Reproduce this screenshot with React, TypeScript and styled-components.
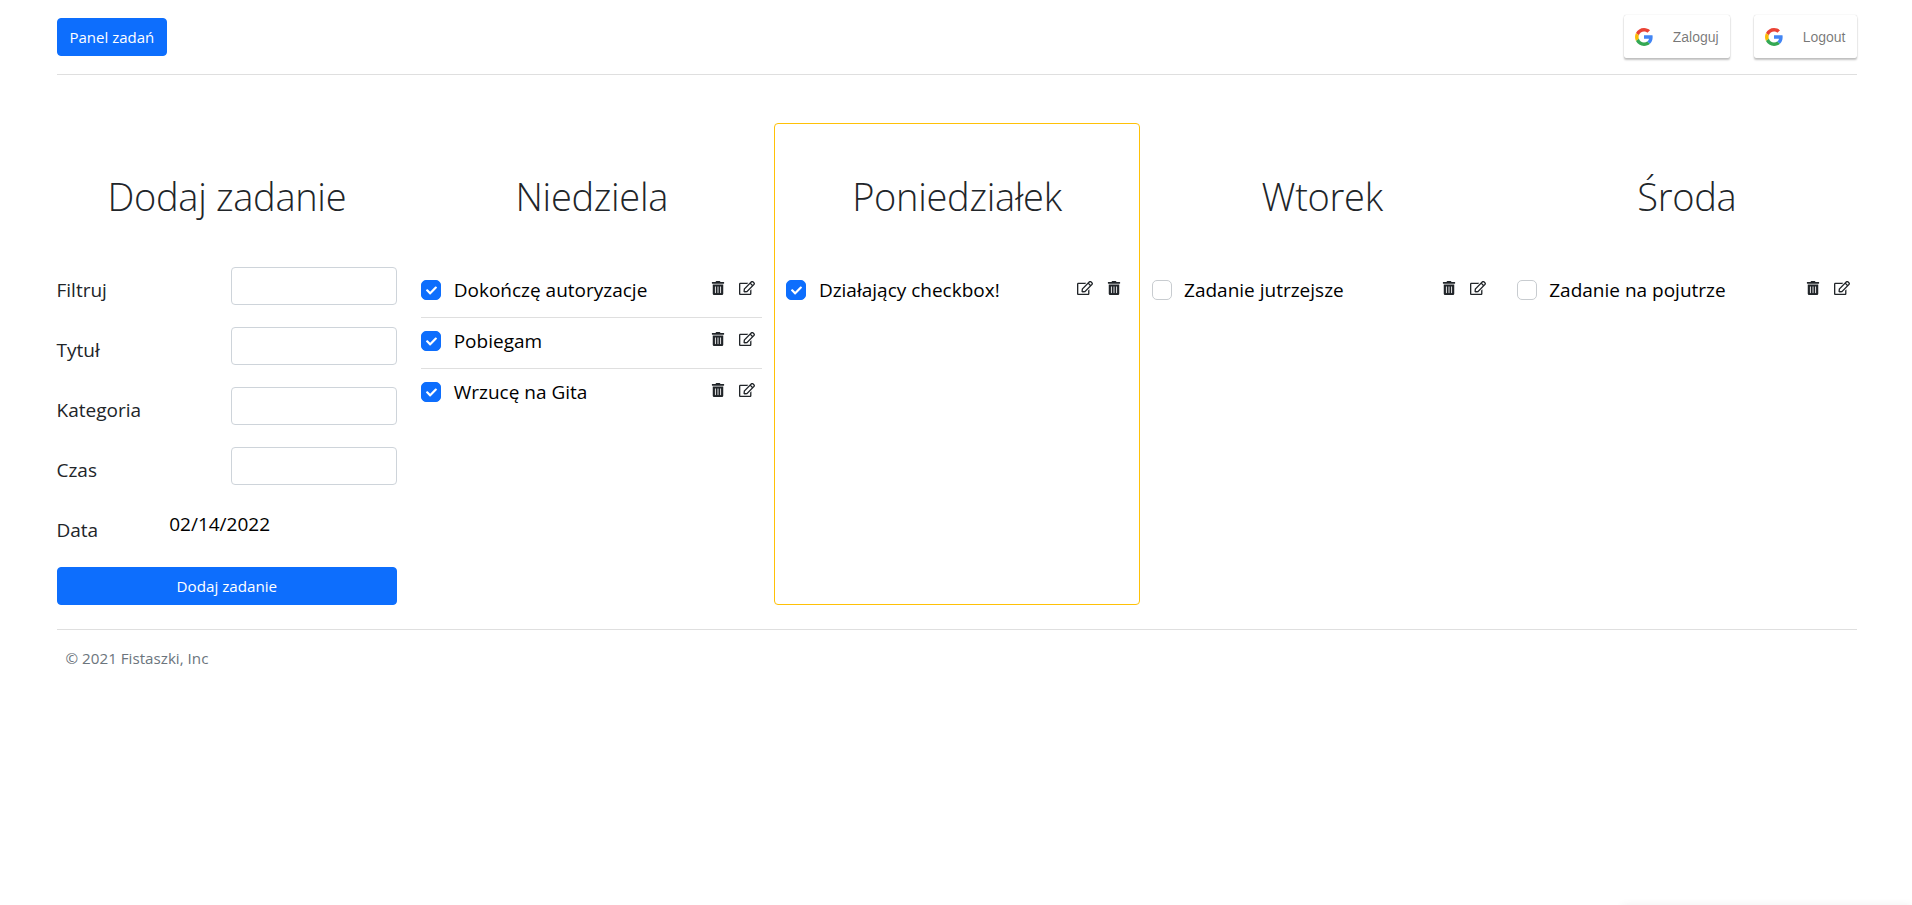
import React from 'react';
import styled, { createGlobalStyle } from 'styled-components';
import { FaCheck, FaRegEdit, FaTrashAlt } from 'react-icons/fa';

const GlobalStyle = createGlobalStyle`
	html, body {
		margin: 0;
		padding: 0;
		background: #fff;
		color: #212529;
		font-family: 'Open Sans', 'Noto Sans', 'Liberation Sans', sans-serif;
		font-size: 16px;
	}
	* {
		box-sizing: border-box;
	}
`;

const Page = styled.div`
	width: 1800px;
	margin-left: 56.5px;
`;

const Header = styled.header`
	display: flex;
	justify-content: space-between;
	align-items: flex-start;
	height: 75px;
	padding-top: 15px;
	border-bottom: 1px solid #dfdfdf;
`;

const PrimaryButton = styled.button<{ $wide?: boolean }>`
	display: block;
	width: ${(props) => (props.$wide ? '100%' : 'auto')};
	height: 38px;
	margin-top: ${(props) => (props.$wide ? '0' : '3px')};
	padding: 0 12px;
	background: #0d6efd;
	border: 1px solid #0d6efd;
	border-radius: 4px;
	color: #fff;
	font-family: inherit;
	font-size: ${(props) => (props.$wide ? '15.2px' : '15px')};
`;

const AuthButtons = styled.div`
	display: flex;
	gap: 24px;
`;

const GoogleButton = styled.button`
	display: flex;
	align-items: center;
	height: 43px;
	padding: 0;
	background: #fff;
	border: 0;
	border-radius: 2px;
	box-shadow: 0 2px 2px 0 rgba(0, 0, 0, 0.24), 0 0 1px 0 rgba(0, 0, 0, 0.24);
	color: rgba(0, 0, 0, 0.54);
	font-family: 'Liberation Sans', sans-serif;
	font-size: 14px;
`;

const GoogleIconBox = styled.span`
	display: flex;
	padding: 10px 11px;
	margin-right: 9px;
`;

const GoogleLabel = styled.span`
	padding: 10px 11px 10px 0;
`;

const Board = styled.main`
	display: grid;
	grid-template-columns: 364.7px 365.2px 365.2px 365.2px 364.2px;
	margin: 48px -12px 0;
`;

const Column = styled.section<{ $highlighted?: boolean }>`
	height: 482px;
	padding: ${(props) => (props.$highlighted ? '0 11px' : '1px 12px 0')};
	border: ${(props) => (props.$highlighted ? '1px solid #ffc107' : '0')};
	border-radius: 4px;
`;

const Title = styled.h1`
	margin: 0 0 47px;
	padding-top: 48px;
	font-size: 38px;
	font-weight: 300;
	letter-spacing: -0.3px;
	line-height: 48px;
	text-align: center;
`;

const FormRow = styled.label`
	display: flex;
	justify-content: space-between;
	height: 38px;
	margin-bottom: 22px;
	font-size: 19px;
	line-height: 46px;
`;

const TextInput = styled.input`
	width: 166px;
	height: 38px;
	background: #fff;
	border: 1px solid #ced4da;
	border-radius: 4px;
`;

const DateValue = styled.span`
	flex: 1;
	margin: -6px 0 0 71px;
	color: #000;
`;

const Task = styled.div`
	display: flex;
	align-items: flex-start;
	height: 51px;
	padding-top: 13px;
	border-bottom: 1px solid #dfdfdf;
	font-size: 19px;

	&:last-child {
		border-bottom: 0;
	}
`;

const Checkbox = styled.span<{ $checked?: boolean }>`
	display: flex;
	align-items: center;
	justify-content: center;
	flex: none;
	width: 20px;
	height: 20px;
	background: ${(props) => (props.$checked ? '#0d6efd' : '#fff')};
	border: 1px solid ${(props) => (props.$checked ? '#0d6efd' : '#c8ccd0')};
	border-radius: 5px;
	color: #fff;
	font-size: 11px;
`;

const TaskName = styled.span`
	flex: 1;
	margin-left: 12.5px;
	color: #000;
	line-height: 21px;
`;

const TaskActions = styled.span`
	display: flex;
	align-items: center;
	gap: 14px;
	height: 14px;
	margin: 1px 7px 0 0;
	color: #212529;
	font-size: 14px;
`;

const EditIcon = styled(FaRegEdit)`
	font-size: 16px;
`;

const Footer = styled.footer`
	margin-top: 24px;
	padding: 18px 9px;
	border-top: 1px solid #dfdfdf;
	color: #6c757d;
	font-size: 15.2px;
`;

const OffscreenToast = styled.div`
	position: fixed;
	top: 905px;
	right: 0;
	width: 290px;
	height: 40px;
	box-shadow: 0 0 8px rgba(0, 0, 0, 0.06);
`;

const GoogleIcon: React.FC = () => (
	<svg width="18" height="18" viewBox="0 0 18 18">
		<path fill="#EA4335" d="M9 3.48c1.69 0 2.83.73 3.48 1.34l2.54-2.48C13.46.89 11.43 0 9 0 5.48 0 2.44 2.02.96 4.96l2.91 2.26C4.6 5.05 6.62 3.48 9 3.48z" />
		<path fill="#4285F4" d="M17.64 9.2c0-.74-.06-1.28-.19-1.84H9v3.34h4.96c-.1.83-.64 2.08-1.84 2.92l2.84 2.2c1.7-1.57 2.68-3.88 2.68-6.62z" />
		<path fill="#FBBC05" d="M3.88 10.78A5.54 5.54 0 0 1 3.58 9c0-.62.11-1.22.29-1.78L.96 4.96A9.008 9.008 0 0 0 0 9c0 1.45.35 2.82.96 4.04l2.92-2.26z" />
		<path fill="#34A853" d="M9 18c2.43 0 4.47-.8 5.96-2.18l-2.84-2.2c-.76.53-1.78.9-3.12.9-2.38 0-4.4-1.57-5.12-3.74L.97 13.04C2.45 15.98 5.48 18 9 18z" />
	</svg>
);

type TaskData = { name: string; done: boolean };

type DayData = { title: string; tasks: TaskData[]; highlighted?: boolean };

const days: DayData[] = [
	{
		title: 'Niedziela',
		tasks: [
			{ name: 'Dokończę autoryzacje', done: true },
			{ name: 'Pobiegam', done: true },
			{ name: 'Wrzucę na Gita', done: true },
		],
	},
	{ title: 'Poniedziałek', highlighted: true, tasks: [{ name: 'Działający checkbox!', done: true }] },
	{ title: 'Wtorek', tasks: [{ name: 'Zadanie jutrzejsze', done: false }] },
	{ title: 'Środa', tasks: [{ name: 'Zadanie na pojutrze', done: false }] },
];

const App: React.FC = () => (
	<Page>
		<GlobalStyle />
		<Header>
			<PrimaryButton>Panel zadań</PrimaryButton>
			<AuthButtons>
				<GoogleButton>
					<GoogleIconBox><GoogleIcon /></GoogleIconBox>
					<GoogleLabel>Zaloguj</GoogleLabel>
				</GoogleButton>
				<GoogleButton>
					<GoogleIconBox><GoogleIcon /></GoogleIconBox>
					<GoogleLabel>Logout</GoogleLabel>
				</GoogleButton>
			</AuthButtons>
		</Header>
		<Board>
			<Column>
				<Title>Dodaj zadanie</Title>
				{['Filtruj', 'Tytuł', 'Kategoria', 'Czas'].map((label) => (
					<FormRow key={label}>
						{label}
						<TextInput />
					</FormRow>
				))}
				<FormRow>
					Data
					<DateValue>02/14/2022</DateValue>
				</FormRow>
				<PrimaryButton $wide>Dodaj zadanie</PrimaryButton>
			</Column>
			{days.map((day) => (
				<Column key={day.title} $highlighted={day.highlighted}>
					<Title>{day.title}</Title>
					{day.tasks.map((task) => (
						<Task key={task.name}>
							<Checkbox $checked={task.done}>{task.done && <FaCheck />}</Checkbox>
							<TaskName>{task.name}</TaskName>
							<TaskActions>
								{day.highlighted ? <EditIcon /> : <FaTrashAlt />}
								{day.highlighted ? <FaTrashAlt /> : <EditIcon />}
							</TaskActions>
						</Task>
					))}
				</Column>
			))}
		</Board>
		<Footer>© 2021 Fistaszki, Inc</Footer>
		<OffscreenToast />
	</Page>
);

export default App;
